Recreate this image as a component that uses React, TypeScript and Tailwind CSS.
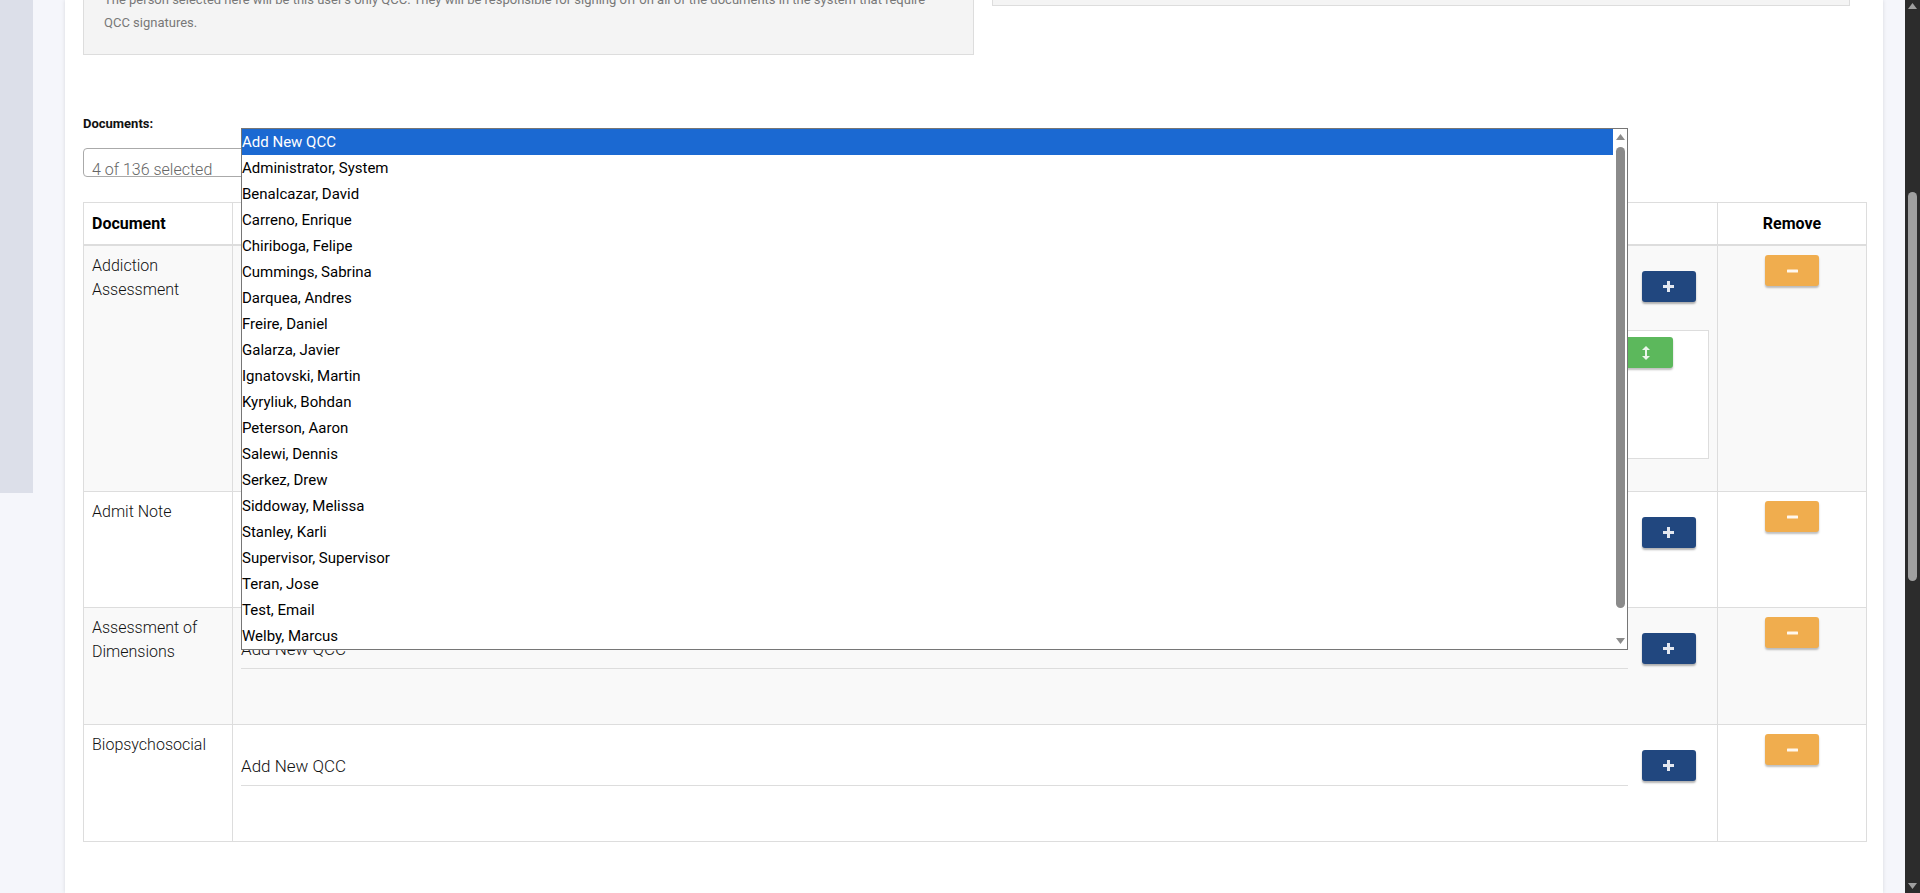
import React from 'react'

const qccOptions = [
  'Add New QCC',
  'Administrator, System',
  'Benalcazar, David',
  'Carreno, Enrique',
  'Chiriboga, Felipe',
  'Cummings, Sabrina',
  'Darquea, Andres',
  'Freire, Daniel',
  'Galarza, Javier',
  'Ignatovski, Martin',
  'Kyryliuk, Bohdan',
  'Peterson, Aaron',
  'Salewi, Dennis',
  'Serkez, Drew',
  'Siddoway, Melissa',
  'Stanley, Karli',
  'Supervisor, Supervisor',
  'Teran, Jose',
  'Test, Email',
  'Welby, Marcus',
]

const documents = [
  { name: 'Addiction Assessment', height: 'h-[246px]', striped: true, assigned: 'Peterson, Aaron' },
  { name: 'Admit Note', height: 'h-[116px]', striped: false },
  { name: 'Assessment of Dimensions', height: 'h-[117px]', striped: true },
  { name: 'Biopsychosocial', height: 'h-[117px]', striped: false },
]

const PlusIcon = () => (
  <svg width="11" height="11" viewBox="0 0 11 11">
    <path d="M4 0h3v4h4v3H7v4H4V7H0V4h4z" fill="#e4e8f0" />
  </svg>
)

const MinusIcon = () => (
  <svg width="11" height="4" viewBox="0 0 11 4">
    <rect x="0" y="0.5" width="11" height="3" rx="0.5" fill="#fff8ee" />
  </svg>
)

const SortIcon = () => (
  <svg width="8" height="14" viewBox="0 0 8 14">
    <polygon points="4,0 8,4 5,4 5,10 8,10 4,14 0,10 3,10 3,4 0,4" fill="#eaf6ea" />
  </svg>
)

const Arrow = ({ down, color }: { down?: boolean; color: string }) => (
  <svg width="9" height="6" viewBox="0 0 9 6">
    <polygon points={down ? '0,0 9,0 4.5,6' : '4.5,0 9,6 0,6'} fill={color} />
  </svg>
)

const AddButton = () => (
  <button className="flex h-[31px] w-[54px] items-center justify-center rounded-[3px] bg-[#21477f] shadow-[0_2px_2px_rgba(0,0,0,0.3)]">
    <PlusIcon />
  </button>
)

const RemoveButton = () => (
  <button className="flex h-[31px] w-[54px] items-center justify-center rounded-[3px] bg-[#f0ad4e] shadow-[0_2px_2px_rgba(0,0,0,0.25)]">
    <MinusIcon />
  </button>
)

const QccListbox = () => (
  <div className="absolute left-[176px] top-[128px] z-10 flex h-[522px] w-[1387px] border border-[#767676] bg-white">
    <div className="flex-1">
      {qccOptions.map((option, i) => (
        <div
          key={option}
          className={
            i === 0
              ? 'h-[26px] bg-[#1b69d2] text-[15px] leading-[26px] text-white'
              : 'h-[26px] text-[15px] leading-[26px] text-black'
          }
        >
          {option}
        </div>
      ))}
    </div>
    <div className="flex w-[14px] flex-col items-center pt-[5px] pb-[5px]">
      <Arrow color="#8b8b8b" />
      <div className="mt-[7px] h-[461px] w-[9px] rounded-full bg-[#8b8b8b]" />
      <div className="flex-1" />
      <Arrow down color="#8b8b8b" />
    </div>
  </div>
)

const DocumentRow = ({ doc }: { doc: (typeof documents)[number] }) => (
  <div className={`flex border-b border-[#ddd] ${doc.height} ${doc.striped ? 'bg-[#f9f9f9]' : 'bg-white'}`}>
    <div className="w-[149px] shrink-0 border-r border-[#ddd] px-[8px] pt-[8px] text-[16px] leading-[24px] font-light text-[#111]">
      {doc.name}
    </div>
    <div className="w-[1485px] shrink-0 border-r border-[#ddd] px-[8px] pt-[25px]">
      <div className="flex items-start">
        <div className="h-[36px] w-[1387px] border-b border-[#ddd] pb-[3px] text-[17px] leading-[32px] font-light text-[#111]">
          Add New QCC
        </div>
        <div className="flex w-[81px] justify-center">
          <AddButton />
        </div>
      </div>
      {doc.assigned && (
        <div className="mt-[23px] flex h-[129px] items-start justify-between border border-[#ddd] bg-white pt-[6px] pr-[35px] pl-[8px]">
          <span className="text-[16px] leading-[31px] text-[#333]">{doc.assigned}</span>
          <button className="flex h-[31px] w-[54px] items-center justify-center rounded-[3px] bg-[#5cb85c] shadow-[0_2px_2px_rgba(0,0,0,0.25)]">
            <SortIcon />
          </button>
        </div>
      )}
    </div>
    <div className="flex flex-1 justify-center pt-[9px]">
      <RemoveButton />
    </div>
  </div>
)

const App = () => {
  return (
    <div className="flex h-[893px] w-[1920px] overflow-hidden bg-[#f5f6fb] font-[Roboto,'Liberation_Sans',sans-serif]">
      <aside className="w-[33px] shrink-0">
        <div className="h-[493px] bg-[#dcdfe9]" />
      </aside>
      <div className="w-[32px] shrink-0" />

      <main className="relative w-[1818px] shrink-0 bg-white pl-[18px] shadow-[0_0_4px_rgba(0,0,0,0.12)]">
        <div className="-mt-[33px] flex items-start gap-[18px]">
          <div className="w-[891px] border border-[#ddd] bg-[#f4f4f4] p-[20px] text-[13px] leading-[23px] text-[#787878]">
            The person selected here will be this user's only QCC. They will be responsible for signing off on all of
            the documents in the system that require QCC signatures.
          </div>
          <div className="h-[39px] w-[858px] border border-[#ddd] bg-[#f4f4f4]" />
        </div>

        <div className="mt-[61px] text-[13px] leading-4 font-bold text-[#111]">Documents:</div>

        <div className="mt-[16px] h-[29px] w-[250px] overflow-hidden rounded-[4px] border border-[#aaa] pl-[8px] pt-[10px] text-[16px] leading-[21px] font-light text-[#666]">
          4 of 136 selected
        </div>

        <div className="mt-[25px] w-[1784px] border-x border-t border-[#ddd]">
          <div className="flex h-[43px] border-b-2 border-[#ddd] bg-white text-[16px] font-bold text-black">
            <div className="flex w-[149px] shrink-0 items-center border-r border-[#ddd] px-[8px]">Document</div>
            <div className="flex w-[1485px] shrink-0 items-center border-r border-[#ddd] px-[8px]">QCC</div>
            <div className="flex flex-1 items-center justify-center">Remove</div>
          </div>
          {documents.map((doc) => (
            <DocumentRow key={doc.name} doc={doc} />
          ))}
        </div>

        <QccListbox />
      </main>

      <div className="w-[22px] shrink-0" />

      <div className="flex w-[15px] shrink-0 flex-col items-center bg-[#2c2c2c] pt-[3px] pb-[4px]">
        <Arrow color="#a0a0a0" />
        <div className="mt-[183px] h-[389px] w-[9px] rounded-full bg-[#a0a0a0]" />
        <div className="flex-1" />
        <Arrow down color="#a0a0a0" />
      </div>
    </div>
  )
}

export default App
